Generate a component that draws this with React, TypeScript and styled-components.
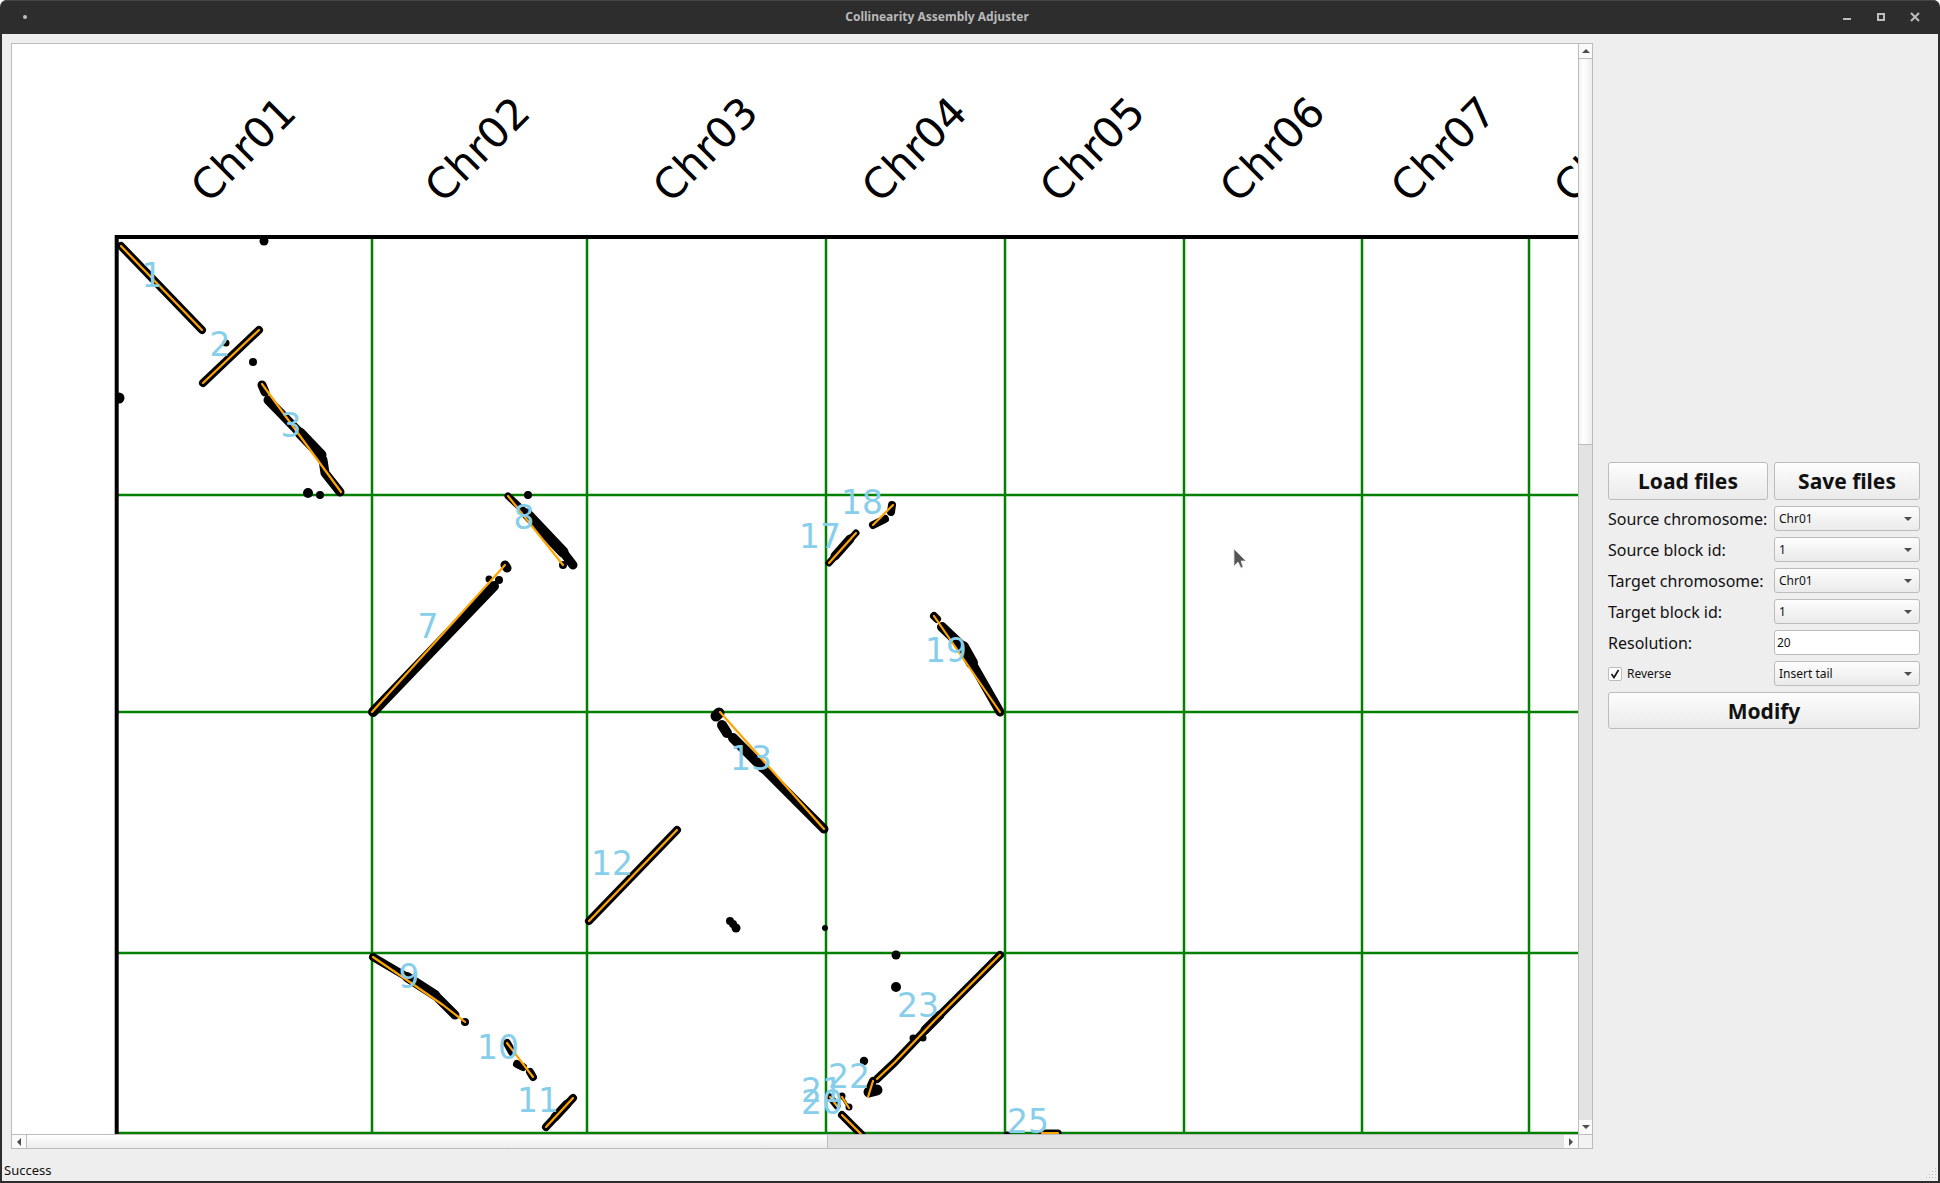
import React from 'react';
import styled, { createGlobalStyle } from 'styled-components';

const GlobalStyle = createGlobalStyle`
  html, body {
    margin: 0;
    padding: 0;
    background: #ffffff;
    overflow: hidden;
  }
  * {
    box-sizing: border-box;
  }
`;

const Window = styled.div`
  width: 1940px;
  height: 1183px;
  display: flex;
  flex-direction: column;
  background: #2d2d2d;
  border-radius: 7px 7px 0 0;
  padding: 0 2px 2px;
  font-family: 'Noto Sans', sans-serif;
  color: #111111;
`;

const TitleBar = styled.div`
  position: relative;
  flex: none;
  height: 34px;
  display: flex;
  align-items: center;
  justify-content: center;
  border-top: 1px solid #444444;
  margin: 0 -2px;
  border-radius: 7px 7px 0 0;
`;

const TitleDot = styled.span`
  position: absolute;
  left: 23px;
  top: 14px;
  width: 4px;
  height: 4px;
  border-radius: 50%;
  background: #bdbdbd;
`;

const Title = styled.span`
  font-size: 12px;
  font-weight: 700;
  color: #b9b9b9;
  margin-left: -66px;
  margin-top: -2px;
`;

const WindowButtons = styled.div`
  position: absolute;
  right: 0;
  top: 0;
`;

const Content = styled.div`
  flex: 1;
  min-height: 0;
  display: flex;
  flex-direction: column;
  background: #eeeeee;
`;

const MainRow = styled.div`
  flex: 1;
  min-height: 0;
  display: flex;
  align-items: center;
  gap: 15px;
  padding: 9px 18px 0 9px;
`;

const ScrollArea = styled.div`
  position: relative;
  width: 1582px;
  height: 100%;
  display: grid;
  grid-template-columns: 1fr 14px;
  grid-template-rows: 1fr 14px;
  border: 1px solid #bcbcbc;
  background: #eeeeee;
`;

const Viewport = styled.div`
  overflow: hidden;
  background: #ffffff;
`;

const Scrollbar = styled.div<{ $vertical?: boolean }>`
  display: flex;
  flex-direction: ${(p) => (p.$vertical ? 'column' : 'row')};
  background: #e3e3e3;
  ${(p) => (p.$vertical ? 'border-left: 1px solid #bcbcbc;' : 'border-top: 1px solid #bcbcbc;')}
`;

const ScrollButton = styled.div<{ $vertical?: boolean }>`
  flex: none;
  width: ${(p) => (p.$vertical ? '13px' : '14px')};
  height: ${(p) => (p.$vertical ? '14px' : '13px')};
  display: flex;
  align-items: center;
  justify-content: center;
  background: #fafafa;
`;

const Thumb = styled.div<{ $vertical?: boolean; $size: number }>`
  flex: none;
  ${(p) => (p.$vertical ? `height: ${p.$size}px;` : `width: ${p.$size}px;`)}
  ${(p) =>
    p.$vertical
      ? 'background: linear-gradient(to right, #f2f2f2, #ffffff 35%, #eeeeee); border-top: 1px solid #bcbcbc; border-bottom: 1px solid #bcbcbc;'
      : 'background: linear-gradient(to bottom, #ffffff, #ececec); border-left: 1px solid #bcbcbc; border-right: 1px solid #bcbcbc;'}
`;

const Track = styled.div`
  flex: 1;
`;

const Corner = styled.div`
  border-left: 1px solid #bcbcbc;
  border-top: 1px solid #bcbcbc;
  background: #f2f2f2;
`;

const Arrow = styled.span<{ $dir: 'up' | 'down' | 'left' | 'right' }>`
  width: 0;
  height: 0;
  ${(p) =>
    p.$dir === 'up'
      ? 'border-left: 4px solid transparent; border-right: 4px solid transparent; border-bottom: 4px solid #4d4d4d;'
      : p.$dir === 'down'
        ? 'border-left: 4px solid transparent; border-right: 4px solid transparent; border-top: 4px solid #4d4d4d;'
        : p.$dir === 'left'
          ? 'border-top: 4px solid transparent; border-bottom: 4px solid transparent; border-right: 4px solid #4d4d4d;'
          : 'border-top: 4px solid transparent; border-bottom: 4px solid transparent; border-left: 4px solid #4d4d4d;'}
`;

const MouseCursor = styled.svg`
  position: absolute;
  left: 1221px;
  top: 504px;
`;

const Panel = styled.div`
  flex: none;
  width: 312px;
  margin-top: -1px;
  display: grid;
  grid-template-columns: 160px 146px;
  grid-template-rows: 38px repeat(6, 25px) 37px;
  gap: 6px;
`;

const PushButton = styled.button<{ $wide?: boolean }>`
  ${(p) => (p.$wide ? 'grid-column: 1 / 3;' : '')}
  padding: 0;
  border: 1px solid #bcbcbc;
  border-radius: 3px;
  background: linear-gradient(to bottom, #fdfdfd, #eaeaea);
  font-family: 'Noto Sans', sans-serif;
  font-size: 21px;
  font-weight: 700;
  color: #111111;
`;

const FieldLabel = styled.label`
  display: flex;
  align-items: center;
  font-size: 16px;
  white-space: nowrap;
`;

const Combo = styled.div`
  display: flex;
  align-items: center;
  justify-content: space-between;
  padding: 0 7px 0 4px;
  border: 1px solid #bcbcbc;
  border-radius: 3px;
  background: linear-gradient(to bottom, #fdfdfd, #eaeaea);
  font-size: 12px;
`;

const LineEdit = styled.div`
  display: flex;
  align-items: center;
  padding: 0 2px;
  border: 1px solid #bcbcbc;
  border-radius: 3px;
  background: #ffffff;
  font-size: 12px;
`;

const CheckRow = styled.div`
  display: flex;
  align-items: center;
  gap: 5px;
  font-size: 12px;
`;

const CheckBox = styled.span`
  width: 14px;
  height: 14px;
  display: flex;
  align-items: center;
  justify-content: center;
  border: 1px solid #bcbcbc;
  border-radius: 2px;
  background: #ffffff;
`;

const StatusBar = styled.div`
  position: relative;
  flex: none;
  height: 32px;
  display: flex;
  align-items: center;
  padding: 9px 0 0 2px;
  font-size: 13px;
`;

const SizeGrip = styled.svg`
  position: absolute;
  right: 1px;
  bottom: 2px;
`;

type Stroke = { pts: string; w: number };

const GRID_X = [372, 587, 826, 1005, 1184, 1362, 1529];
const GRID_Y = [495, 712, 953, 1133];

const CHROMOSOMES: [string, number, number][] = [
  ['Chr01', 243, 149],
  ['Chr02', 477, 149],
  ['Chr03', 705, 149],
  ['Chr04', 914, 149],
  ['Chr05', 1092, 149],
  ['Chr06', 1272, 149],
  ['Chr07', 1443, 149],
  ['Chr08', 1606, 149],
];

// page coordinates, the svg viewBox starts where the viewport starts
const BLACK: Stroke[] = [
  { pts: '121,246 202,330', w: 8 },
  { pts: '203,383 259,330', w: 8 },
  { pts: '262,385 265,392', w: 9 },
  { pts: '268,400 300,433', w: 9 },
  { pts: '300,433 321,455', w: 11 },
  { pts: '323,460 325,473 340,492', w: 9 },
  { pts: '373,712 494,586', w: 10 },
  { pts: '505,565 507,568', w: 9 },
  { pts: '508,496 527,514', w: 7 },
  { pts: '527,514 563,552', w: 11 },
  { pts: '563,552 573,565', w: 9 },
  { pts: '373,957 407,977', w: 8 },
  { pts: '407,977 435,995', w: 10 },
  { pts: '435,995 455,1015', w: 9 },
  { pts: '507,1043 512,1052', w: 8 },
  { pts: '517,1064 523,1067', w: 8 },
  { pts: '530,1072 533,1077', w: 8 },
  { pts: '546,1127 573,1098', w: 8 },
  { pts: '555,1117 567,1104', w: 9 },
  { pts: '589,921 677,830', w: 8 },
  { pts: '716,716 719,713', w: 11 },
  { pts: '722,725 727,733', w: 10 },
  { pts: '733,738 763,768', w: 10 },
  { pts: '763,768 824,829', w: 9 },
  { pts: '829,563 856,533', w: 7 },
  { pts: '835,556 850,539', w: 9 },
  { pts: '873,525 885,519', w: 8 },
  { pts: '892,505 891,512', w: 8 },
  { pts: '934,616 937,619', w: 8 },
  { pts: '942,627 963,647', w: 10 },
  { pts: '963,647 972,663', w: 12 },
  { pts: '972,663 1000,712', w: 9 },
  { pts: '877,1079 895,1062 935,1020 1000,955', w: 8 },
  { pts: '925,1030 940,1015', w: 9 },
  { pts: '868,1092 873,1081', w: 8 },
  { pts: '869,1092 877,1090', w: 11 },
  { pts: '830,1097 837,1106', w: 7 },
  { pts: '842,1115 862,1135', w: 8 },
  { pts: '842,1097 849,1108', w: 3 },
  { pts: '1042,1133 1058,1133', w: 7 },
];

const ORANGE: string[] = [
  '121,246 202,330',
  '203,383 259,330',
  '262,384 341,492',
  '372,712 505,565',
  '508,496 563,565',
  '373,957 417,987 443,1005 465,1022',
  '507,1043 533,1077',
  '546,1127 573,1098',
  '589,921 677,830',
  '720,712 824,829',
  '829,563 856,533',
  '873,525 893,505',
  '934,616 1000,712',
  '877,1079 895,1062 935,1020 1000,955',
  '868,1097 873,1081',
  '830,1097 837,1106',
  '842,1115 862,1135',
  '842,1097 849,1108',
  '1042,1133 1058,1133',
];

const DOTS: [number, number, number][] = [
  [264, 241, 4.5],
  [253, 362, 4],
  [226, 343, 3.5],
  [119, 398, 5.5],
  [308, 493, 5],
  [320, 495, 4],
  [489, 579, 3.5],
  [499, 580, 4],
  [528, 495, 4],
  [563, 565, 4],
  [465, 1022, 4],
  [730, 921, 4],
  [733, 924, 4],
  [736, 928, 4.5],
  [825, 928, 3],
  [896, 955, 4.5],
  [896, 987, 5],
  [864, 1061, 4.2],
  [913, 1038, 3.5],
  [923, 1038, 3.5],
  [849, 1107, 3.5],
  [842, 1096, 3.5],
  [1007, 1135, 3.5],
];

const LABELS: [string, number, number][] = [
  ['1', 152, 287],
  ['2', 220, 356],
  ['3', 291, 437],
  ['7', 428, 638],
  ['8', 524, 529],
  ['9', 409, 988],
  ['10', 498, 1059],
  ['11', 538, 1112],
  ['12', 612, 875],
  ['13', 751, 770],
  ['17', 820, 548],
  ['18', 862, 514],
  ['19', 946, 662],
  ['20', 822, 1114],
  ['21', 822, 1102],
  ['22', 849, 1088],
  ['23', 918, 1017],
  ['25', 1028, 1133],
];

const DotPlot = () => (
  <svg width="1566" height="1091" viewBox="12 44 1566 1091" style={{ display: 'block' }}>
    <defs>
      <clipPath id="axes">
        <rect x="116" y="236" width="1462" height="898" />
      </clipPath>
    </defs>
    <g fontFamily="'DejaVu Sans', sans-serif" fontSize="42" fill="#000000" textAnchor="middle">
      {CHROMOSOMES.map(([name, x, y]) => (
        <text key={name} x={x} y={y + 15} transform={`rotate(-45 ${x} ${y})`}>
          {name}
        </text>
      ))}
    </g>
    <g stroke="#008000" strokeWidth="2.5">
      {GRID_X.map((x) => (
        <line key={x} x1={x} y1="237" x2={x} y2="1135" />
      ))}
      {GRID_Y.map((y) => (
        <line key={y} x1="116" y1={y} x2="1578" y2={y} />
      ))}
    </g>
    <g clipPath="url(#axes)">
      <g fill="none" stroke="#000000" strokeLinecap="round" strokeLinejoin="round">
        {BLACK.map((s) => (
          <polyline key={s.pts} points={s.pts} strokeWidth={s.w} />
        ))}
      </g>
      <g fill="#000000">
        {DOTS.map(([x, y, r]) => (
          <circle key={`${x}-${y}`} cx={x} cy={y} r={r} />
        ))}
      </g>
      <g fill="none" stroke="#ffa500" strokeWidth="2.2" strokeLinecap="round" strokeLinejoin="round">
        {ORANGE.map((pts) => (
          <polyline key={pts} points={pts} />
        ))}
      </g>
    </g>
    <g stroke="#000000" strokeWidth="4">
      <line x1="116.7" y1="235" x2="116.7" y2="1135" />
      <line x1="115" y1="237" x2="1578" y2="237" />
    </g>
    <g fontFamily="'DejaVu Sans', sans-serif" fontSize="33" fill="#87ceeb" textAnchor="middle">
      {LABELS.map(([text, x, y]) => (
        <text key={text} x={x} y={y}>
          {text}
        </text>
      ))}
    </g>
  </svg>
);

const ComboBox = ({ value }: { value: string }) => (
  <Combo>
    {value}
    <Arrow $dir="down" />
  </Combo>
);

const App = () => (
  <>
    <GlobalStyle />
    <Window>
      <TitleBar>
        <TitleDot />
        <Title>Collinearity Assembly Adjuster</Title>
        <WindowButtons>
          <svg width="110" height="34" viewBox="1830 0 110 34" style={{ display: 'block' }}>
            <g stroke="#bdbdbd" fill="none" strokeWidth="2">
              <line x1="1843" y1="18" x2="1851" y2="18" />
              <rect x="1878" y="13" width="6" height="6" />
              <path d="M1911 12 L1919 20 M1919 12 L1911 20" />
            </g>
          </svg>
        </WindowButtons>
      </TitleBar>
      <Content>
        <MainRow>
          <ScrollArea>
            <Viewport>
              <DotPlot />
            </Viewport>
            <MouseCursor width="14" height="22" viewBox="0 0 14 22">
              <path d="M1 1 L1 18 L5 14 L8 20 L10 19 L8 13 L13 13 Z" fill="#555555" stroke="#dddddd" strokeWidth="0.8" />
            </MouseCursor>
            <Scrollbar $vertical>
              <ScrollButton $vertical>
                <Arrow $dir="up" />
              </ScrollButton>
              <Thumb $vertical $size={387} />
              <Track />
              <ScrollButton $vertical>
                <Arrow $dir="down" />
              </ScrollButton>
            </Scrollbar>
            <Scrollbar>
              <ScrollButton>
                <Arrow $dir="left" />
              </ScrollButton>
              <Thumb $size={802} />
              <Track />
              <ScrollButton>
                <Arrow $dir="right" />
              </ScrollButton>
            </Scrollbar>
            <Corner />
          </ScrollArea>
          <Panel>
            <PushButton>Load files</PushButton>
            <PushButton>Save files</PushButton>
            <FieldLabel>Source chromosome:</FieldLabel>
            <ComboBox value="Chr01" />
            <FieldLabel>Source block id:</FieldLabel>
            <ComboBox value="1" />
            <FieldLabel>Target chromosome:</FieldLabel>
            <ComboBox value="Chr01" />
            <FieldLabel>Target block id:</FieldLabel>
            <ComboBox value="1" />
            <FieldLabel>Resolution:</FieldLabel>
            <LineEdit>20</LineEdit>
            <CheckRow>
              <CheckBox>
                <svg width="10" height="10" viewBox="0 0 10 10">
                  <path d="M1.5 5 L4 8.5 L8.5 1" fill="none" stroke="#111111" strokeWidth="1.6" />
                </svg>
              </CheckBox>
              Reverse
            </CheckRow>
            <ComboBox value="Insert tail" />
            <PushButton $wide>Modify</PushButton>
          </Panel>
        </MainRow>
        <StatusBar>
          Success
          <SizeGrip width="11" height="11" viewBox="0 0 11 11">
            <g fill="#bdbdbd">
              <rect x="9" y="0" width="1" height="1" />
              <rect x="6" y="3" width="1" height="1" />
              <rect x="9" y="3" width="1" height="1" />
              <rect x="3" y="6" width="1" height="1" />
              <rect x="6" y="6" width="1" height="1" />
              <rect x="9" y="6" width="1" height="1" />
              <rect x="0" y="9" width="1" height="1" />
              <rect x="3" y="9" width="1" height="1" />
              <rect x="6" y="9" width="1" height="1" />
              <rect x="9" y="9" width="1" height="1" />
            </g>
          </SizeGrip>
        </StatusBar>
      </Content>
    </Window>
  </>
);

export default App;
